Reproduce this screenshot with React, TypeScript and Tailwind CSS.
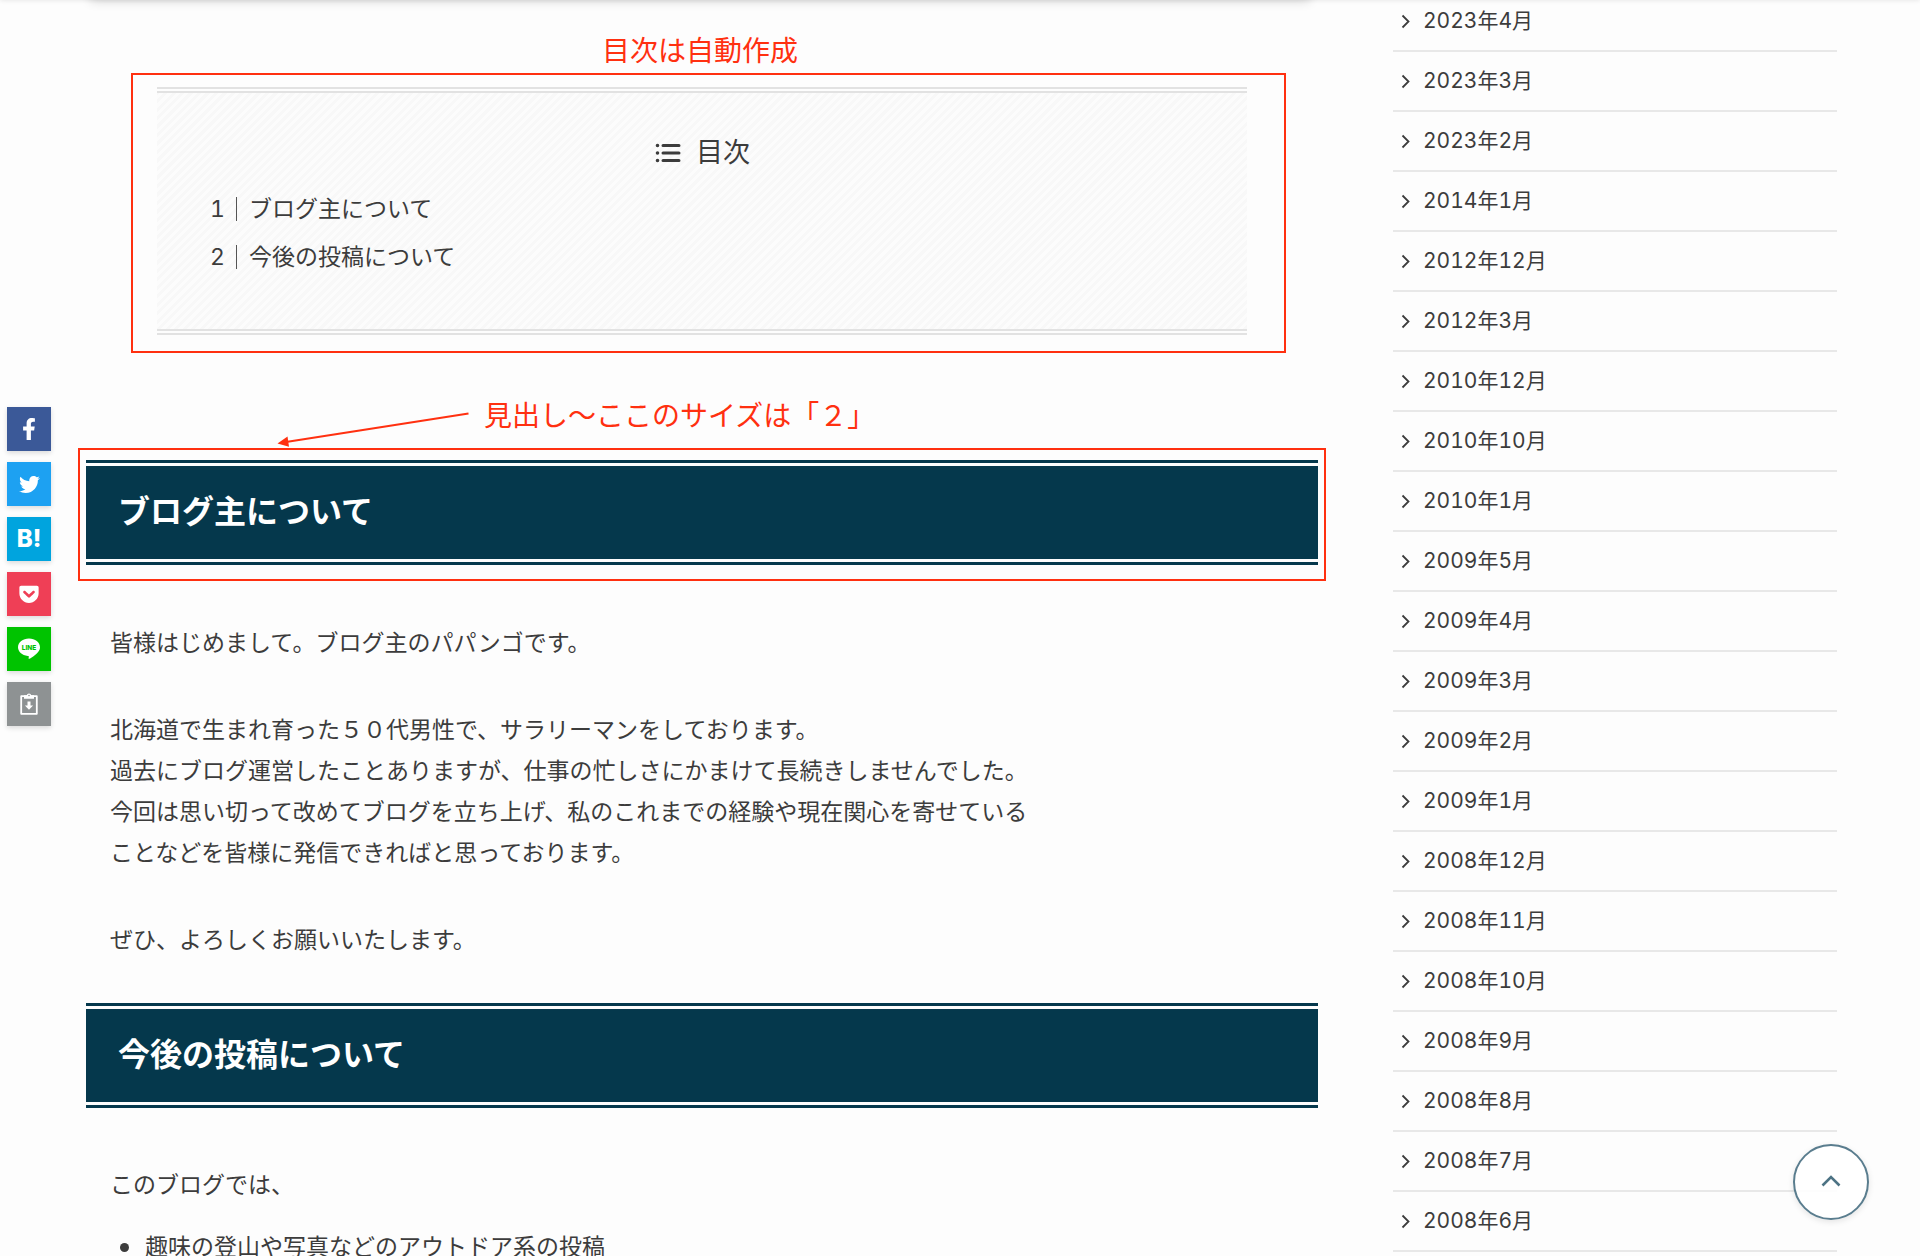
import { FaFacebookF, FaGetPocket, FaTwitter } from "react-icons/fa";

const archives = [
  "2023年4月",
  "2023年3月",
  "2023年2月",
  "2014年1月",
  "2012年12月",
  "2012年3月",
  "2010年12月",
  "2010年10月",
  "2010年1月",
  "2009年5月",
  "2009年4月",
  "2009年3月",
  "2009年2月",
  "2009年1月",
  "2008年12月",
  "2008年11月",
  "2008年10月",
  "2008年9月",
  "2008年8月",
  "2008年7月",
  "2008年6月",
];

const toc = ["ブログ主について", "今後の投稿について"];

function LineIcon() {
  return (
    <svg className="w-6 h-6" viewBox="0 0 24 24">
      <path
        fill="#fff"
        d="M12 1.5c6.1 0 11 3.9 11 8.7 0 2-.8 3.700-2.300 5.300-2.200 2.600-7 5.700-8.200 6.200-1.100.5-.9-.3-.9-.6l.2-1c0-.3.1-.7-.1-.9-.2-.2-.6-.3-.9-.3C4.900 18.200 1 14.500 1 10.200 1 5.400 5.900 1.500 12 1.500z"
      />
      <text
        x="12"
        y="12.700"
        textAnchor="middle"
        fontSize="6.500"
        fontWeight="800"
        fontFamily="Inter, sans-serif"
        fill="#00c300"
      >
        LINE
      </text>
    </svg>
  );
}

function ClipboardIcon() {
  return (
    <svg className="w-6 h-6" viewBox="0 0 24 24" fill="none" stroke="#fff">
      <path strokeWidth={1.8} strokeLinejoin="round" d="M4.200 4.200h15.600v17.600H4.200z" />
      <path
        fill="#fff"
        stroke="none"
        d="M7 3.200h2.700a2.400 2.400 0 0 1 4.600 0H17v3.600H7z"
      />
      <circle cx="12" cy="3.500" r="0.800" fill="#8e9293" stroke="none" />
      <path fill="#fff" stroke="none" d="M10.500 9.500h3v4h2.600L12 17.700l-4.100-4.200h2.600z" />
    </svg>
  );
}

const shares = [
  { label: "Facebook", color: "bg-[#3b5998]", icon: <FaFacebookF className="w-[22px] h-[22px]" /> },
  { label: "Twitter", color: "bg-[#1da1f2]", icon: <FaTwitter className="w-[21px] h-[21px]" /> },
  {
    label: "はてなブックマーク",
    color: "bg-[#00a4de]",
    icon: <span className="font-['Inter',sans-serif] text-[24px] leading-6 font-extrabold">B!</span>,
  },
  { label: "Pocket", color: "bg-[#ef3f56]", icon: <FaGetPocket className="w-[22px] h-[22px]" /> },
  { label: "LINE", color: "bg-[#00c300]", icon: <LineIcon /> },
  { label: "URLをコピー", color: "bg-[#8e9293]", icon: <ClipboardIcon /> },
];

function SectionHeading({ children }: { children: string }) {
  return (
    <h2 className="border-y-[3px] border-[#05384c] py-[3px]">
      <span className="block bg-[#05384c] px-8 pt-[23px] pb-[25px] text-[32px] leading-[45px] font-bold text-white">
        {children}
      </span>
    </h2>
  );
}

export default function App() {
  return (
    <div className="h-screen overflow-hidden bg-[#fdfdfd] font-['Inter','Noto_Sans_CJK_JP',sans-serif] text-[#3c3c3c] tabular-nums">
      {/* ヘッダーの影 */}
      <div className="fixed inset-x-0 -top-1 h-1 shadow-[0_0_5px_rgba(0,0,0,0.12)]" />
      <div className="fixed -top-3 left-[90px] right-[610px] h-3 shadow-[0_0_12px_rgba(0,0,0,0.2)]" />

      <div className="flex items-start">
        {/* シェアボタン */}
        <aside className="ml-[7px] mr-[35px] mt-[407px] flex w-11 shrink-0 flex-col gap-[11px]">
          {shares.map((share) => (
            <button
              key={share.label}
              type="button"
              aria-label={share.label}
              className={`flex h-11 w-11 items-center justify-center text-white shadow-[0_2px_5px_rgba(0,0,0,0.14)] ${share.color}`}
            >
              {share.icon}
            </button>
          ))}
        </aside>

        {/* 本文 */}
        <main className="min-w-0 flex-1 pt-[33px] text-[23px] leading-[41px]">
          <p className="mb-1 pr-1 text-center text-[28px] leading-9 text-[#ff3010]">目次は自動作成</p>
          <div className="ml-[45px] mr-8 border-2 border-[#ff3010] pt-3 pr-[37px] pb-4 pl-6">
            <nav className="border-y-[6px] border-double border-[#e2e2e2] bg-[repeating-linear-gradient(-45deg,#f8f8f8_0,#f8f8f8_3px,#fcfcfc_3px,#fcfcfc_6px)] bg-clip-padding pt-10 pb-12">
              <div className="flex items-center justify-center gap-[14px] text-[27px] leading-10">
                <svg className="h-7 w-7" viewBox="0 0 28 28" fill="none" stroke="#3c3c3c" strokeWidth={3} strokeLinecap="round">
                  <path d="M9 6.500h16M9 14h16M9 21.500h16" />
                  <path d="M3.500 6.500h.01M3.500 14h.01M3.500 21.500h.01" strokeWidth={3.600} />
                </svg>
                目次
              </div>
              <ol className="mt-3 pl-[53px] leading-[48px]">
                {toc.map((title, i) => (
                  <li key={title} className="flex items-center">
                    <span className="w-[26px]">{i + 1}</span>
                    <span className="mr-3 h-6 w-px bg-[#555]" />
                    <a href={`#section-${i + 1}`}>{title}</a>
                  </li>
                ))}
              </ol>
            </nav>
          </div>

          <div className="mt-[43px] flex h-[52px] items-start gap-[14px] pl-[184px] text-[28px] leading-10 text-[#ff3010]">
            <svg className="h-[52px] w-[200px]" viewBox="0 0 200 52">
              <path d="M198.500 17.500L16 46" stroke="#ff3010" strokeWidth={2.200} />
              <path d="M7.500 47.500l10-7 1.500 10.300z" fill="#ff3010" />
            </svg>
            <p>見出し〜ここのサイズは「２」</p>
          </div>
          <section id="section-1">
            <div className="-mx-2 border-2 border-[#ff3010] px-[6px] pt-[10px] pb-[14px]">
              <SectionHeading>ブログ主について</SectionHeading>
            </div>
            <div className="mt-[42px] space-y-[46px] px-6">
              <p>皆様はじめまして。ブログ主のパパンゴです。</p>
              <p>
                北海道で生まれ育った５０代男性で、サラリーマンをしております。
                <br />
                過去にブログ運営したことありますが、仕事の忙しさにかまけて長続きしませんでした。
                <br />
                今回は思い切って改めてブログを立ち上げ、私のこれまでの経験や現在関心を寄せている
                <br />
                ことなどを皆様に発信できればと思っております。
              </p>
              <p>ぜひ、よろしくお願いいたします。</p>
            </div>
          </section>

          <section id="section-2" className="mt-[42px]">
            <SectionHeading>今後の投稿について</SectionHeading>
            <div className="mt-[57px] px-6">
              <p>このブログでは、</p>
              <ul className="mt-[21px]">
                <li className="flex items-center gap-4 pl-[10px]">
                  <span className="h-[9px] w-[9px] rounded-full bg-[#3c3c3c]" />
                  趣味の登山や写真などのアウトドア系の投稿
                </li>
              </ul>
            </div>
          </section>
        </main>

        {/* アーカイブ */}
        <aside className="-mt-2 mr-[83px] ml-[75px] w-[444px] shrink-0">
          <ul>
            {archives.map((month) => (
              <li key={month} className="border-b-2 border-[#e8e8e8]">
                <a href="#archive" className="flex h-[58px] items-center gap-3 pl-2 text-[21px]">
                  <svg className="h-4 w-[10px]" viewBox="0 0 10 16" fill="none" stroke="#3c3c3c" strokeWidth={1.800}>
                    <path d="M1.500 2.500L7.500 8.500l-6 6" />
                  </svg>
                  {month}
                </a>
              </li>
            ))}
          </ul>
        </aside>
      </div>

      {/* ページトップへ */}
      <button
        type="button"
        aria-label="ページトップへ"
        className="fixed right-[51px] bottom-9 flex h-[76px] w-[76px] items-center justify-center rounded-full border-2 border-[#5a7d8e] bg-white/90 shadow-[0_2px_6px_rgba(0,0,0,0.1)]"
      >
        <svg className="h-6 w-6" viewBox="0 0 24 24" fill="none" stroke="#4d7384" strokeWidth={2.600}>
          <path d="M3.500 15.500L12 7l8.500 8.500" />
        </svg>
      </button>
    </div>
  );
}
